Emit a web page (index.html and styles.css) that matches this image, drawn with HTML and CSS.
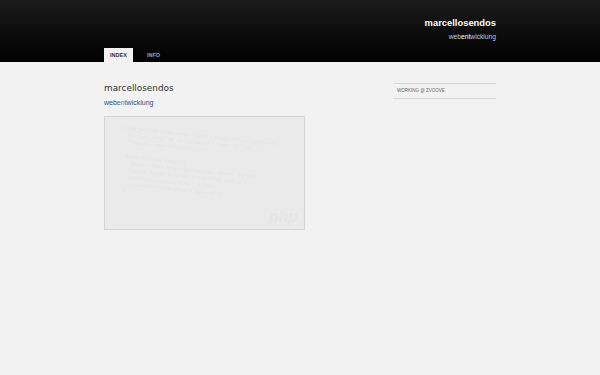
FILE: index.html
```html
<html>
    <head>
        <title>marcellosendos</title>
        <link rel="stylesheet" href="styles.css">
    </head>
    <body>
        <div class="header">
            <div class="wrap">
                <div class="brand">
                    <h1>marcellosendos</h1>
                    <p class="sub"><span class="a">web</span><span class="b">ent</span><span class="a">wicklung</span></p>
                </div>
                <ul class="tabs">
                    <li class="active">INDEX</li>
                    <li>INFO</li>
                </ul>
            </div>
        </div>
        <div class="wrap content">
            <div class="main">
                <h2>marcellosendos</h2>
                <p class="sub2"><span class="a">web</span><span class="b">ent</span><span class="a">wicklung</span></p>
                <div class="shot">
                    <div class="code">
                        <p>&lt;?php function render($view, $data) { return $this-&gt;load($view); }</p>
                        <p>&nbsp;&nbsp;$config = array('db' =&gt; 'localhost', 'user' =&gt; 'root');</p>
                        <p>&nbsp;&nbsp;&nbsp;&nbsp;$result = $query-&gt;fetchAll();</p>
                        <p>&nbsp;</p>
                        <p>&nbsp;&nbsp;public function index() {</p>
                        <p>&nbsp;&nbsp;&nbsp;&nbsp;$items = $this-&gt;model-&gt;getItems($id, $limit, $offset);</p>
                        <p>&nbsp;&nbsp;&nbsp;&nbsp;foreach ($items as $item) { echo $item['name']; }</p>
                        <p>&nbsp;&nbsp;&nbsp;&nbsp;$this-&gt;view-&gt;assign('items', $items);</p>
                        <p>&nbsp;&nbsp;&nbsp;&nbsp;return $this-&gt;view-&gt;render('index.tpl');</p>
                        <p>&nbsp;&nbsp;}</p>
                    </div>
                    <span class="php">php</span>
                </div>
            </div>
            <div class="side">
                <p class="work">WORKING @ ZVOOVE</p>
            </div>
        </div>
    </body>
</html>
```

FILE: styles.css
```css
*{
    margin: 0;
    padding: 0;
    box-sizing: border-box;
}
body{
    background: #f2f2f2;
    font-family: "DejaVu Sans", Verdana, sans-serif;
}
.wrap{
    width: 392px;
    margin: 0 auto;
}
.header{
    height: 62px;
    background: linear-gradient(#1b1b1b, #000);
}
.header .wrap{
    height: 62px;
    display: flex;
    flex-direction: column;
    justify-content: space-between;
}
.brand{
    text-align: right;
    padding-top: 17px;
}
.brand h1{
    font-family: "Liberation Sans", Arial, sans-serif;
    font-size: 9.4px;
    font-weight: bold;
    color: #fff;
    line-height: 12px;
}
.sub{
    font-family: "Liberation Sans", Arial, sans-serif;
    font-size: 6.7px;
    margin-top: 4px;
    line-height: 8px;
}
.sub .a{
    color: #b4cbe8;
}
.sub .b{
    color: #fff;
}
.tabs{
    list-style: none;
    display: flex;
}
.tabs li{
    font-family: "Liberation Sans", Arial, sans-serif;
    font-size: 5.5px;
    font-weight: bold;
    color: #8fa4c4;
    height: 14px;
    line-height: 14px;
    padding: 0 7px;
}
.tabs li.active{
    background: #f2f2f2;
    color: #333;
    width: 29px;
    text-align: center;
    padding: 0;
    margin-right: 7px;
}
.content{
    display: flex;
    justify-content: space-between;
    padding-top: 20px;
}
.main{
    width: 201px;
}
.main h2{
    font-weight: normal;
    font-size: 8.9px;
    color: #333;
    line-height: 12px;
}
.sub2{
    font-family: "Liberation Sans", Arial, sans-serif;
    font-size: 7px;
    margin-top: 5px;
    line-height: 8px;
}
.sub2 .a{
    color: #2d4f86;
}
.sub2 .b{
    color: #666;
}
.shot{
    position: relative;
    margin-top: 9px;
    height: 114px;
    border: 1px solid #d4d4d4;
    background: #eaeaea;
    overflow: hidden;
}
.code{
    padding: 5px 0 0 20px;
    transform: rotate(6deg);
    transform-origin: left top;
}
.code p{
    font-family: "DejaVu Sans Mono", monospace;
    font-size: 4px;
    line-height: 7px;
    color: #e2e2e2;
    white-space: nowrap;
}
.php{
    position: absolute;
    right: 6px;
    bottom: 3px;
    font-family: "Liberation Sans", Arial, sans-serif;
    font-size: 16px;
    font-weight: bold;
    font-style: italic;
    color: #e5e5e5;
}
.side{
    width: 102px;
    padding-top: 1px;
}
.work{
    border-top: 1px solid #d6d6d6;
    border-bottom: 1px solid #d6d6d6;
    font-family: "Liberation Sans", Arial, sans-serif;
    font-size: 4.5px;
    color: #666;
    height: 16px;
    line-height: 14px;
    padding-left: 3px;
}
```
